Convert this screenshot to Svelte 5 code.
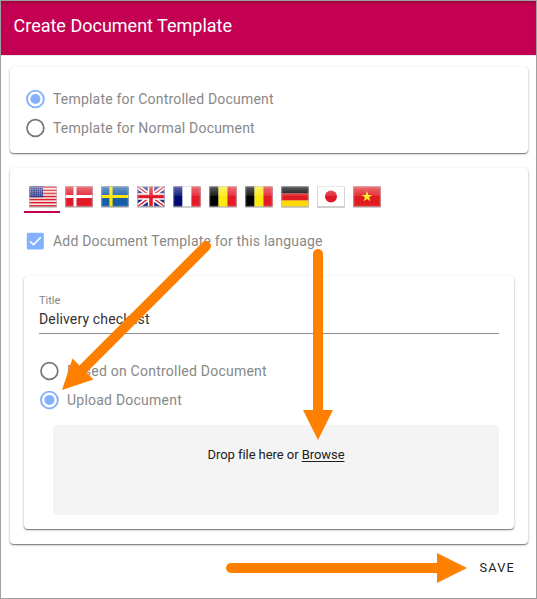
<script>
  let kind = $state('controlled');
  let source = $state('upload');
  let active = $state(0);
  const flags = ['us', 'dk', 'se', 'gb', 'fr', 'be', 'be', 'de', 'jp', 'vn'];
  const bands = {
    fr: ['#000872', '#ffffff', '#e31b29'],
    be: ['#000000', '#fbe90c', '#e31b29'],
  };
</script>

{#snippet radio(on)}
  <svg class="radio" width="20" height="20" viewBox="0 0 20 20">
    <circle cx="10.4" cy="10" r="8.4" fill="none" stroke={on ? '#83b0ff' : '#757575'} stroke-width={on ? 1.9 : 1.7} />
    {#if on}<circle cx="10.4" cy="10" r="5" fill="#83b0ff" />{/if}
  </svg>
{/snippet}

{#snippet flag(code)}
  <svg class="flag" width="28" height="22" viewBox="0 0 28 22">
    <defs>
      <linearGradient id="gloss" x1="0" y1="0" x2="0" y2="1">
        <stop offset="0" stop-color="#fff" stop-opacity=".36" />
        <stop offset="1" stop-color="#fff" stop-opacity=".1" />
      </linearGradient>
    </defs>
    <rect x=".2" y="1" width="27.6" height="20.7" rx=".8" fill="#aaa" opacity=".75" />
    {#if code === 'us'}
      <rect x=".5" y=".5" width="27" height="20" fill="#f6eeee" />
      {#each [0, 1, 2, 3, 4, 5, 6] as i}
        <rect x=".5" y={0.5 + i * 3.08} width="27" height="1.54" fill="#d9202b" />
      {/each}
      <rect x=".5" y=".5" width="13.5" height="10.7" fill="#262f86" />
      {#each [0, 1, 2, 3, 4] as r}
        {#each [0, 1, 2, 3, 4, 5] as c}
          <circle cx={1.8 + c * 2.15} cy={1.8 + r * 2} r=".48" fill="#dce0f4" />
        {/each}
      {/each}
    {:else if code === 'dk'}
      <rect x=".5" y=".5" width="27" height="20" fill="#e01a29" />
      <path d="M10 .5v20M.5 10.5h27" stroke="#fff" stroke-width="3" />
    {:else if code === 'se'}
      <rect x=".5" y=".5" width="27" height="20" fill="#165da8" />
      <path d="M10 .5v20M.5 10.5h27" stroke="#ffe600" stroke-width="3.2" />
    {:else if code === 'gb'}
      <svg x=".5" y=".5" width="27" height="20" viewBox="0 0 27 20">
        <rect width="27" height="20" fill="#21297e" />
        <path d="M0 0L27 20M27 0L0 20" stroke="#fff" stroke-width="4.6" />
        <path d="M0 0L27 20M27 0L0 20" stroke="#df2434" stroke-width="1.5" />
        <path d="M13.5 0v20M0 10h27" stroke="#fff" stroke-width="6.4" />
        <path d="M13.5 0v20M0 10h27" stroke="#df1728" stroke-width="3.6" />
      </svg>
    {:else if bands[code]}
      {#each bands[code] as color, i}
        <rect x={0.5 + i * 9} y=".5" width="9" height="20" fill={color} />
      {/each}
    {:else if code === 'de'}
      <rect x=".5" y=".5" width="27" height="7" fill="#000" />
      <rect x=".5" y="7.5" width="27" height="7" fill="#df1c22" />
      <rect x=".5" y="14.5" width="27" height="6" fill="#ffd900" />
    {:else if code === 'jp'}
      <rect x=".5" y=".5" width="27" height="20" fill="#fff" />
      <circle cx="14" cy="10.5" r="6" fill="#df1728" />
    {:else}
      <rect x=".5" y=".5" width="27" height="20" fill="#df1b20" />
      <path d="M14 5l1.3 3.9h4.1l-3.3 2.4 1.3 4-3.4-2.4-3.4 2.4 1.3-4-3.3-2.4h4.1z" fill="#ffec1c" />
    {/if}
    <path d="M.5 .5h27v9.5h-27z" fill="url(#gloss)" />
    <rect x="1" y="1" width="26" height="19" fill="none" stroke="#fff" stroke-opacity=".2" />
    <rect x=".5" y=".5" width="27" height="20" fill="none" stroke="#777" stroke-opacity=".3" stroke-width=".6" />
  </svg>
{/snippet}

<div class="dialog">
  <header><h1>Create Document Template</h1></header>
  <main>
    <section class="card kinds">
      <button class="option" onclick={() => (kind = 'controlled')}>{@render radio(kind === 'controlled')}<span>Template for Controlled Document</span></button>
      <button class="option" onclick={() => (kind = 'normal')}>{@render radio(kind === 'normal')}<span>Template for Normal Document</span></button>
    </section>

    <section class="card languages">
      <nav>
        {#each flags as code, i}
          <button class="tab" class:active={active === i} onclick={() => (active = i)} aria-label={code}>{@render flag(code)}</button>
        {/each}
      </nav>
      <div class="option check">
        <svg width="20" height="20" viewBox="0 0 20 20">
          <rect x="1.8" y="1.8" width="17" height="16.6" rx="1.3" fill="#83b0ff" />
          <path d="M4.9 10.2l3.6 3.5 7.2-7.3" fill="none" stroke="#fff" stroke-width="1.6" />
        </svg>
        <span>Add Document Template for this language</span>
      </div>
      <div class="card form">
        <div class="field">
          <span class="label">Title</span>
          <span class="value">Delivery checklist</span>
        </div>
        <button class="option" onclick={() => (source = 'based')}>{@render radio(source === 'based')}<span>Based on Controlled Document</span></button>
        <button class="option" onclick={() => (source = 'upload')}>{@render radio(source === 'upload')}<span>Upload Document</span></button>
        <div class="drop"><span>Drop file here or <u>Browse</u></span></div>
      </div>
    </section>
  </main>
  <footer><button class="save">SAVE</button></footer>

  <svg class="arrows" width="537" height="599" viewBox="0 0 537 599">
    <g fill="none" stroke="#ff8000" stroke-width="10" stroke-linecap="round">
      <path d="M206 246L83 369" />
      <path d="M318 254V412" />
      <path d="M231 568H440" />
    </g>
    <g fill="#ff8000">
      <path d="M62 390L72.5 358.5L93.5 379.5Z" />
      <path d="M303 410H333L318 440Z" />
      <path d="M437 553V583L467 568Z" />
    </g>
  </svg>
</div>

<style>
  .dialog {
    position: relative;
    box-sizing: border-box;
    width: 537px;
    height: 599px;
    border: 1px solid #a0a0a0;
    background: #fff;
    font-family: Roboto, sans-serif;
    color: #212121;
    overflow: hidden;
  }
  header {
    height: 54px;
    box-sizing: border-box;
    padding: 13px 0 0 12.5px;
    background: #c40052;
    box-shadow: inset 0 3px 3px -1px rgba(60, 0, 20, 0.3), 0 1px 0 #e8e8e8;
  }
  h1 {
    margin: 0;
    font-size: 18px;
    line-height: 24px;
    font-weight: 400;
    letter-spacing: 0;
    color: #fff;
    white-space: nowrap;
  }
  main {
    display: flex;
    flex-direction: column;
    gap: 15px;
    padding: 12px 8px 0 9px;
  }
  .card {
    box-sizing: border-box;
    background: #fff;
    border-radius: 4px;
    box-shadow: 0 1px 1px rgba(0, 0, 0, 0.4), 0 1px 3px rgba(0, 0, 0, 0.24);
  }
  .kinds {
    height: 86px;
    padding: 17.5px 15px 0;
  }
  button {
    border: 0;
    padding: 0;
    background: none;
    font: inherit;
    cursor: pointer;
  }
  .option {
    display: flex;
    align-items: center;
    gap: 8px;
    height: 28.7px;
    font-size: 14px;
    letter-spacing: 0.19px;
    color: #888;
    white-space: nowrap;
  }
  .option svg {
    flex: none;
  }
  .languages {
    height: 376px;
    padding: 15px 14px 0;
  }
  nav {
    display: flex;
    height: 30px;
  }
  .tab {
    box-sizing: border-box;
    width: 36px;
    height: 30px;
    display: flex;
    justify-content: center;
    padding: 3px 0 0 1px;
    border-bottom: 2px solid transparent;
  }
  .tab.active {
    border-color: #c40052;
  }
  .check {
    margin: 14px 0 0 1px;
  }
  .form {
    height: 253px;
    margin-top: 20px;
    padding: 17px 15px 0;
  }
  .field {
    display: flex;
    flex-direction: column;
    height: 41px;
    box-sizing: border-box;
    border-bottom: 1px solid #8b8b8b;
    margin-bottom: 22.8px;
  }
  .label {
    font-size: 11px;
    line-height: 16px;
    letter-spacing: 0;
    color: #858585;
  }
  .value {
    font-size: 14px;
    line-height: 20px;
    letter-spacing: 0.15px;
    color: #333;
  }
  .form .option {
    letter-spacing: 0.23px;
  }
  .drop {
    display: flex;
    justify-content: center;
    height: 90px;
    box-sizing: border-box;
    padding-top: 20px;
    margin: 10.8px 0 0 14px;
    background: #f4f4f4;
    font-size: 13px;
    line-height: 19px;
    letter-spacing: -0.06px;
  }
  u {
    text-underline-offset: 2px;
  }
  footer {
    display: flex;
    justify-content: flex-end;
    padding: 12px 21px 0 0;
  }
  .save {
    font-size: 12.8px;
    line-height: 24px;
    letter-spacing: 1.2px;
    color: #212121;
  }
  .arrows {
    position: absolute;
    left: -1px;
    top: -1px;
    pointer-events: none;
  }
</style>
